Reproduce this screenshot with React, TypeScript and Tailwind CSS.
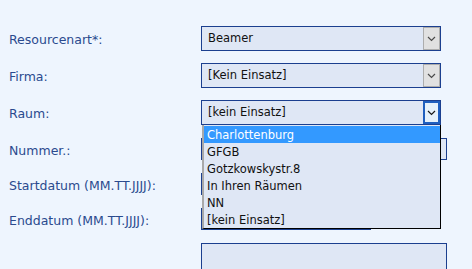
import React from "react";

function Chevron({ dark }: { dark?: boolean }) {
  return (
    <svg width="9" height="6" viewBox="0 0 9 6" className="block">
      <polyline
        points="1,1 4.5,4.5 8,1"
        fill="none"
        stroke={dark ? "#1a1a1a" : "#4a4a4a"}
        strokeWidth="1.2"
      />
    </svg>
  );
}

function Select({ value, focused, children }: { value: string; focused?: boolean; children?: React.ReactNode }) {
  return (
    <div className="relative flex h-full w-[240px] items-stretch border border-[#1b3f8f] bg-[#dfe7f5]">
      <div className="flex flex-1 items-center pl-[6px] pt-[1px] text-[11.5px] text-[#111111]">{value}</div>
      {focused ? (
        <div className="flex w-[17px] items-center justify-center border-2 border-[#1f5fbf] bg-[#e5f1fb]">
          <Chevron dark />
        </div>
      ) : (
        <div className="flex w-[17px] items-center justify-center border border-[#adadad] bg-[#e1e1e1]">
          <Chevron />
        </div>
      )}
      {children}
    </div>
  );
}

function Label({ text }: { text: string }) {
  return (
    <div className="w-[201px] shrink-0 pl-[9px] pt-[4px] text-[12.5px] text-[#2a4a8e]">{text}</div>
  );
}

const items = ["Charlottenburg", "GFGB", "Gotzkowskystr.8", "In Ihren Räumen", "NN", "[kein Einsatz]"];

export default function App() {
  return (
    <div className="relative h-[269px] w-[472px] overflow-hidden bg-[#eef5fe] pt-[26px] font-['DejaVu_Sans',sans-serif]">
      <div className="flex h-[25px] items-center">
        <Label text="Resourcenart*:" />
        <Select value="Beamer" />
      </div>
      <div className="mt-[12px] flex h-[25px] items-center">
        <Label text="Firma:" />
        <Select value="[Kein Einsatz]" />
      </div>
      <div className="relative z-10 mt-[12px] flex h-[25px] items-center">
        <Label text="Raum:" />
        <Select value="[kein Einsatz]" focused>
          <div className="absolute left-[0px] top-[24px] w-[239px] border-b border-l-2 border-r border-b-black border-l-[#a9a9a9] border-r-black bg-[#dfe7f5] pt-[1px] text-[11.5px] text-[#111111]">
            {items.map((it, i) => (
              <div
                key={it}
                className={
                  i === 0
                    ? "flex h-[17px] items-center bg-[#3399ff] pl-[3px] pt-[2px] text-white"
                    : "flex h-[17px] items-center pl-[3px] pt-[3px]"
                }
              >
                {it}
              </div>
            ))}
          </div>
        </Select>
      </div>
      <div className="mt-[13px] flex h-[22px] items-center">
        <Label text="Nummer.:" />
        <div className="h-full w-[246px] border border-[#1b3f8f] bg-[#dfe7f5]" />
      </div>
      <div className="mt-[13px] flex h-[22px] items-center">
        <Label text="Startdatum (MM.TT.JJJJ):" />
        <div className="h-full w-[170px] border border-[#1b3f8f] bg-[#dfe7f5]" />
      </div>
      <div className="mt-[13px] flex h-[22px] items-center">
        <Label text="Enddatum (MM.TT.JJJJ):" />
        <div className="h-full w-[170px] border border-[#1b3f8f] bg-[#dfe7f5]" />
      </div>
      <div className="mt-[13px] flex h-[60px]">
        <div className="w-[201px] shrink-0" />
        <div className="h-full w-[246px] border border-[#1b3f8f] bg-[#dfe7f5]" />
      </div>
    </div>
  );
}
